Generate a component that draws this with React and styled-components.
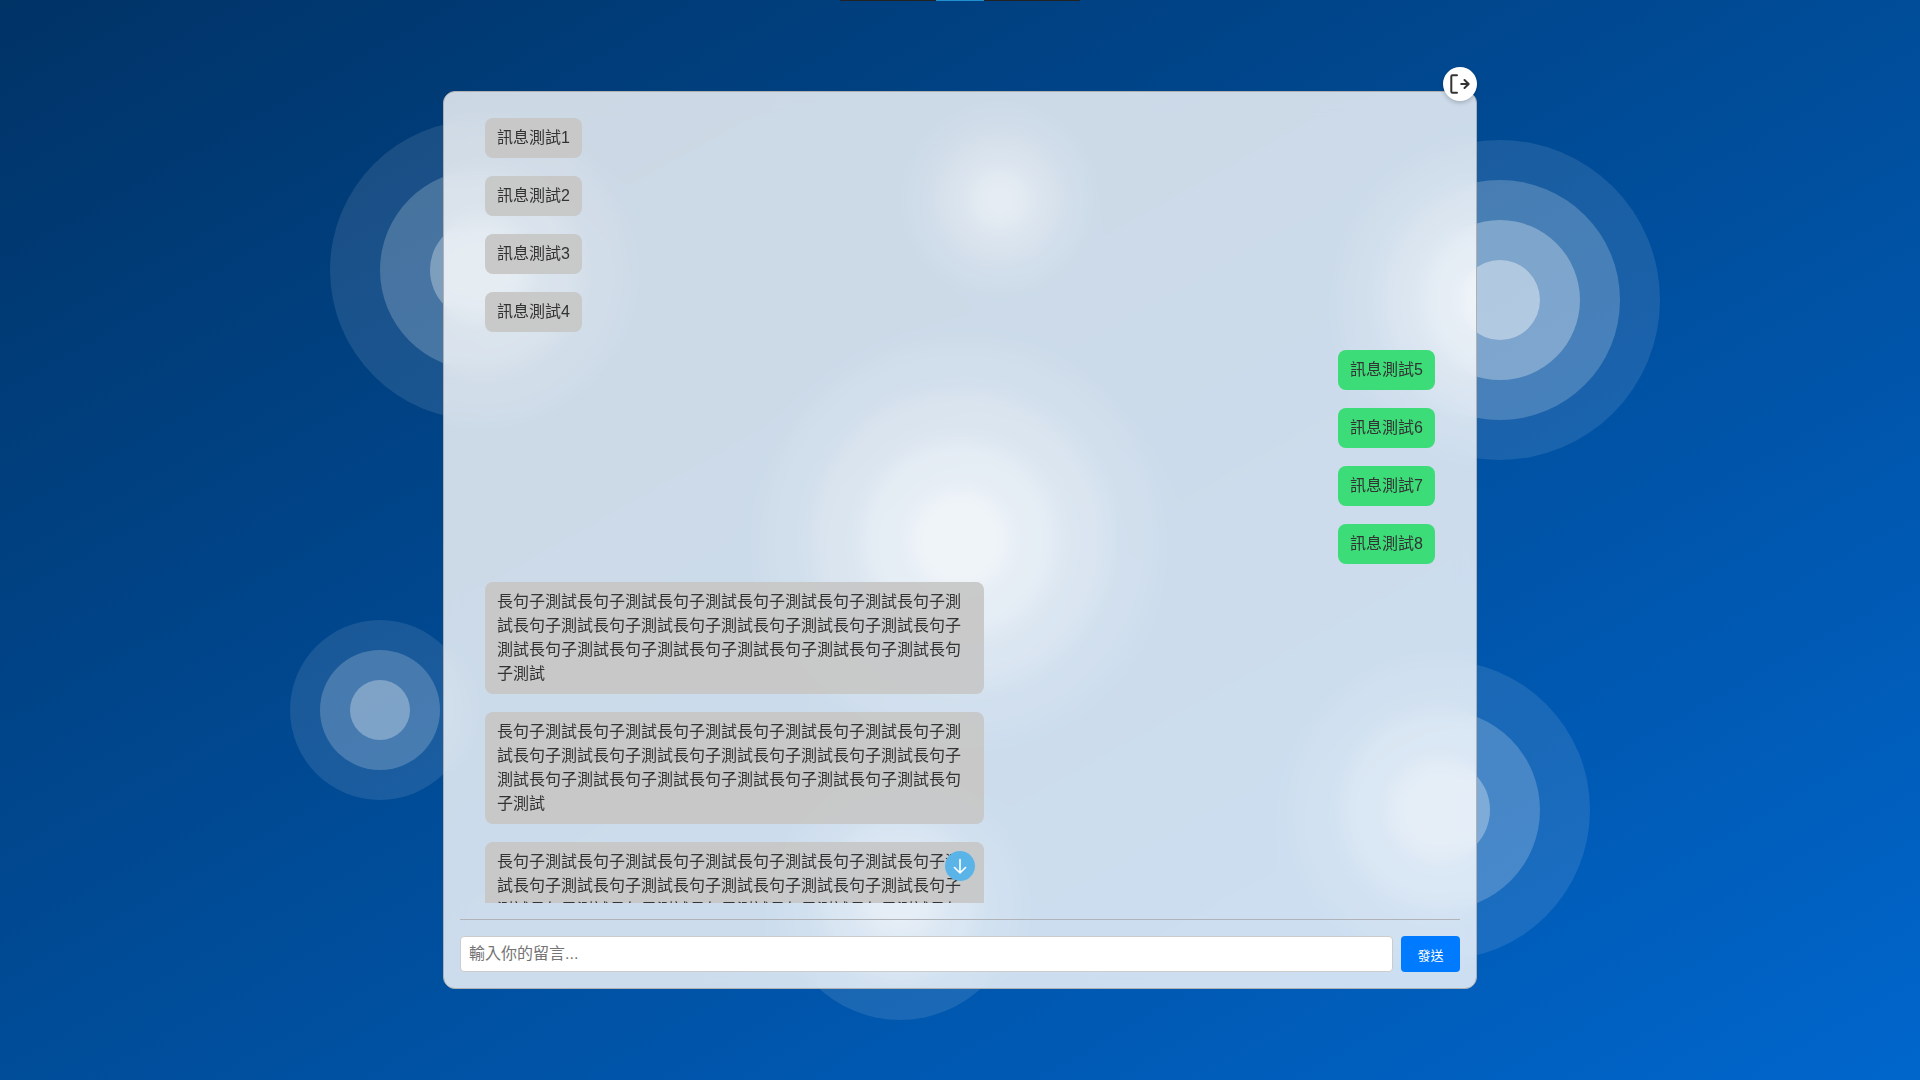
import React, { useRef, useState } from "react";
import styled, { createGlobalStyle } from "styled-components";

const GlobalStyle = createGlobalStyle`
  *, *::before, *::after { box-sizing: border-box; }
  body {
    margin: 0;
    font-family: "Liberation Sans", "Noto Sans CJK TC", sans-serif;
    font-size: 16px;
    line-height: 24px;
    color: #333;
  }
`;

const Page = styled.div`
  position: relative;
  display: grid;
  place-items: center;
  min-height: 100vh;
  padding: 40px 16px;
  overflow: hidden;
  background: linear-gradient(to bottom right, #003366, #0066cc);
`;

const Ripples = styled.svg`
  position: absolute;
  inset: 0;
  width: 100%;
  height: 100%;
`;

const TopTab = styled.div`
  position: absolute;
  top: 0;
  left: 50%;
  transform: translateX(-50%);
  display: flex;
  justify-content: center;
  width: 240px;
  height: 1px;
  background: #222;
`;

const TopTabMark = styled.span`
  width: 48px;
  background: #2090d0;
`;

const Panel = styled.main`
  position: relative;
  display: flex;
  flex-direction: column;
  gap: 16px;
  width: 100%;
  max-width: 1034px;
  height: calc(80vh + 34px);
  padding: 16px;
  border: 1px solid #b0b0b0;
  border-radius: 12px;
  background: rgba(255, 255, 255, 0.8);
  backdrop-filter: blur(10px);
`;

const RoundButton = styled.button`
  position: absolute;
  display: grid;
  place-items: center;
  width: ${(p) => p.$size}px;
  height: ${(p) => p.$size}px;
  padding: 0;
  border: none;
  border-radius: 50%;
  cursor: pointer;
`;

const LeaveButton = styled(RoundButton)`
  top: -25px;
  right: -1px;
  background: #fff;
  color: #333;
  box-shadow: 0 2px 4px rgba(0, 0, 0, 0.2);
`;

const DownButton = styled(RoundButton)`
  bottom: 22px;
  left: 50%;
  transform: translateX(-50%);
  background: #5ab4e8;
  color: #fff;
`;

const Conversation = styled.section`
  position: relative;
  display: flex;
  flex: 1;
  min-height: 0;
`;

const MessageList = styled.ol`
  display: flex;
  flex: 1;
  flex-direction: column;
  gap: 18px;
  margin: 0;
  padding: 10px 25px;
  list-style: none;
  overflow-y: auto;
  scrollbar-width: none;
`;

const Message = styled.li`
  flex: none;
  align-self: ${(p) => (p.$own ? "flex-end" : "flex-start")};
  max-width: calc(50% + 24px);
  padding: 8px 12px;
  border-radius: 8px;
  background: ${(p) => (p.$own ? "#3cdc78" : "rgba(199, 199, 199, 0.95)")};
  overflow-wrap: anywhere;
`;

const Divider = styled.hr`
  width: 100%;
  height: 1px;
  margin: 0;
  border: none;
  background: #b0b4b8;
`;

const Composer = styled.form`
  display: flex;
  gap: 8px;
`;

const TextBox = styled.input`
  flex: 1;
  min-width: 0;
  height: 36px;
  padding: 0 8px;
  border: 1px solid #ccc;
  border-radius: 4px;
  background: #fff;
  color: #333;
  font: inherit;

  &::placeholder { color: #757575; }
`;

const SendButton = styled.button`
  min-width: 59px;
  height: 36px;
  padding: 0 16px;
  border: none;
  border-radius: 4px;
  background: #007bff;
  color: #fff;
  font-family: inherit;
  font-size: 13px;
  cursor: pointer;
`;

const ripples = [
  { x: "25%", y: "25%", step: 50, rings: 3 },
  { x: "50%", y: "50%", step: 50, rings: 4 },
  { x: "75%", y: "75%", step: 50, rings: 3 },
  { x: 1000, y: 200, step: 30, rings: 3 },
  { x: 1500, y: 300, step: 40, rings: 4 },
  { x: 380, y: 710, step: 30, rings: 3 },
  { x: 900, y: 900, step: 40, rings: 3 },
];

const longText = "長句子測試".repeat(18);

const initialMessages = [
  ...[1, 2, 3, 4].map((n) => ({ text: `訊息測試${n}`, own: false })),
  ...[5, 6, 7, 8].map((n) => ({ text: `訊息測試${n}`, own: true })),
  ...[1, 2, 3].map(() => ({ text: longText, own: false })),
];

export default function App() {
  const [messages, setMessages] = useState(initialMessages);
  const [draft, setDraft] = useState("");
  const list = useRef(null);

  const send = (event) => {
    event.preventDefault();
    if (!draft.trim()) return;
    setMessages([...messages, { text: draft, own: true }]);
    setDraft("");
  };

  const toBottom = () => {
    list.current.scrollTo({ top: list.current.scrollHeight, behavior: "smooth" });
  };

  return (
    <>
      <GlobalStyle />
      <Page>
        <Ripples aria-hidden="true">
          {ripples.map((r, i) =>
            Array.from({ length: r.rings }, (_, k) => (
              <circle
                key={`${i}-${k}`}
                cx={r.x}
                cy={r.y}
                r={r.step * (r.rings - k)}
                fill="#fff"
                fillOpacity={(k + 1) / 10}
              />
            ))
          )}
        </Ripples>
        <TopTab>
          <TopTabMark />
        </TopTab>
        <Panel>
          <LeaveButton type="button" $size={34} aria-label="離開">
            <svg width="24" height="24" viewBox="0 0 24 24" fill="none" stroke="currentColor" strokeWidth="2" strokeLinecap="round" strokeLinejoin="round">
              <path d="M9 3.300H4.500a1.200 1.200 0 0 0-1.200 1.200v15a1.200 1.200 0 0 0 1.200 1.200H9" />
              <path d="M13.200 12H20.500M16.500 8l4.200 4-4.200 4" />
            </svg>
          </LeaveButton>
          <Conversation>
            <MessageList ref={list}>
              {messages.map((m, i) => (
                <Message key={i} $own={m.own}>
                  {m.text}
                </Message>
              ))}
            </MessageList>
            <DownButton type="button" $size={30} aria-label="捲動到最新訊息" onClick={toBottom}>
              <svg width="18" height="18" viewBox="0 0 18 18" fill="none" stroke="currentColor" strokeWidth="1.600" strokeLinecap="round" strokeLinejoin="round">
                <path d="M9 2.500V16M3.500 10.500L9 16l5.500-5.500" />
              </svg>
            </DownButton>
          </Conversation>
          <Divider />
          <Composer onSubmit={send}>
            <TextBox
              type="text"
              aria-label="留言"
              placeholder="輸入你的留言..."
              value={draft}
              onChange={(e) => setDraft(e.target.value)}
            />
            <SendButton type="submit">發送</SendButton>
          </Composer>
        </Panel>
      </Page>
    </>
  );
}
